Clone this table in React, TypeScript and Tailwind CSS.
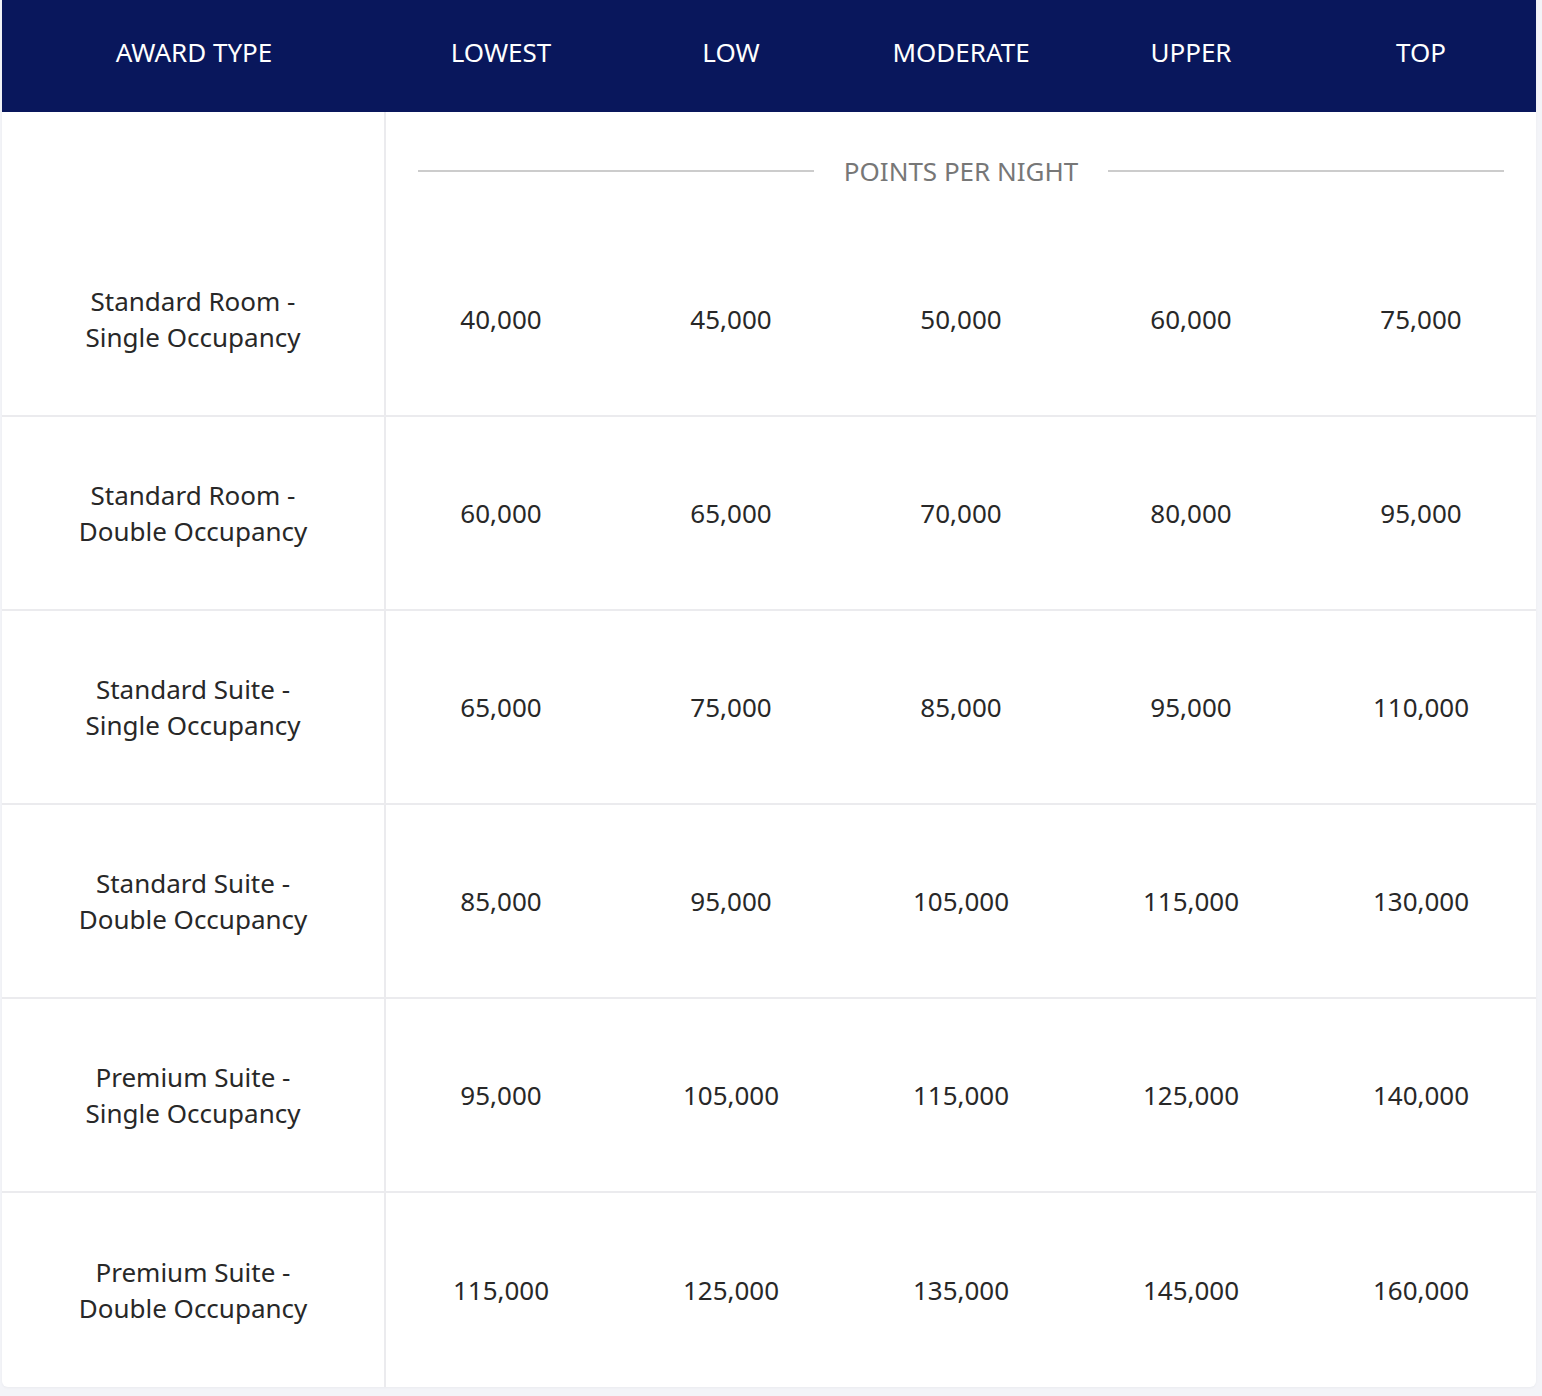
import React from 'react'

const tiers = ['LOWEST', 'LOW', 'MODERATE', 'UPPER', 'TOP']

const awards = [
  { label: ['Standard Room -', 'Single Occupancy'], points: ['40,000', '45,000', '50,000', '60,000', '75,000'] },
  { label: ['Standard Room -', 'Double Occupancy'], points: ['60,000', '65,000', '70,000', '80,000', '95,000'] },
  { label: ['Standard Suite -', 'Single Occupancy'], points: ['65,000', '75,000', '85,000', '95,000', '110,000'] },
  { label: ['Standard Suite -', 'Double Occupancy'], points: ['85,000', '95,000', '105,000', '115,000', '130,000'] },
  { label: ['Premium Suite -', 'Single Occupancy'], points: ['95,000', '105,000', '115,000', '125,000', '140,000'] },
  { label: ['Premium Suite -', 'Double Occupancy'], points: ['115,000', '125,000', '135,000', '145,000', '160,000'] },
]

const AwardRow = ({ label, points, last }: { label: string[]; points: string[]; last: boolean }) => (
  <div className={`grid grid-cols-[384px_repeat(5,230px)] h-[194px] ${last ? '' : 'border-b-2 border-[#ebebee]'}`}>
    <div className="flex flex-col items-center justify-center border-r-2 border-[#ebebee] text-center">
      {label.map((l) => (
        <span key={l}>{l}</span>
      ))}
    </div>
    {points.map((p, i) => (
      <div key={i} className="flex items-center justify-center">
        {p}
      </div>
    ))}
  </div>
)

export default function App() {
  return (
    <div className="min-h-[1396px] bg-[#f3f4f8] pl-[2px] font-['Noto_Sans',sans-serif] text-[26px] leading-[36px] text-[#282828]">
      <div className="w-[1534px] overflow-hidden rounded-b-[6px] bg-white shadow-[0_1px_3px_rgba(0,0,0,0.04)]">
        <div className="grid grid-cols-[384px_repeat(5,230px)] h-[112px] bg-[#09175c] text-white">
          <div className="flex items-center justify-center pb-[8px]">AWARD TYPE</div>
          {tiers.map((t) => (
            <div key={t} className="flex items-center justify-center pb-[8px]">
              {t}
            </div>
          ))}
        </div>

        <div className="grid grid-cols-[384px_1150px] h-[111px]">
          <div className="border-r-2 border-[#ebebee]" />
          <div className="flex items-center gap-[30px] px-[32px] pt-[6px] text-[#777777]">
            <div className="h-[2px] flex-1 bg-[#cccccc]" />
            <span>POINTS PER NIGHT</span>
            <div className="h-[2px] flex-1 bg-[#cccccc]" />
          </div>
        </div>

        {awards.map((a, i) => (
          <AwardRow key={i} label={a.label} points={a.points} last={i === awards.length - 1} />
        ))}
      </div>
    </div>
  )
}
